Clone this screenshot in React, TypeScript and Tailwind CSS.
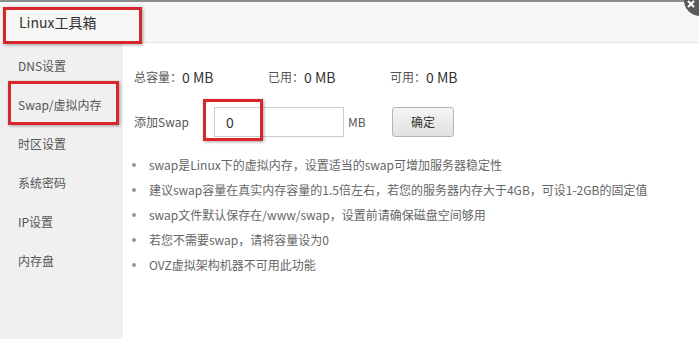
import React from "react";

const menu = ["DNS设置", "Swap/虚拟内存", "时区设置", "系统密码", "IP设置", "内存盘"];
const tips = [
  "swap是Linux下的虚拟内存，设置适当的swap可增加服务器稳定性",
  "建议swap容量在真实内存容量的1.5倍左右，若您的服务器内存大于4GB，可设1-2GB的固定值",
  "swap文件默认保存在/www/swap，设置前请确保磁盘空间够用",
  "若您不需要swap，请将容量设为0",
  "OVZ虚拟架构机器不可用此功能",
];

export default function App() {
  return (
    <div
      className="relative w-[699px] h-[339px] overflow-hidden bg-white text-[#333]"
      style={{ fontFamily: '"Noto Sans CJK SC", "Noto Sans", sans-serif' }}
    >
      <div className="h-[2px] w-[686px] bg-[#8c8c8c]" />
      <div className="h-[41px] bg-[#f6f6f6] border-b border-[#e6e6e6] flex items-center pl-[19px] text-[14px] text-[#333]">
        Linux工具箱
      </div>
      <div className="flex h-[296px]">
        <div className="w-[123px] bg-[#f0f0f0] pt-[3px]">
          {menu.map((m) => (
            <div key={m} className="h-[39px] flex items-center pl-[18px] text-[12px] text-[#555]">
              {m}
            </div>
          ))}
        </div>
        <div className="flex-1 pl-[11px] pt-[24px]">
          <div className="flex items-center h-[20px]">
            <div className="w-[134px] flex items-center">
              <span className="text-[12px] text-[#555]">总容量：</span>
              <span className="text-[14px] text-[#333]">0 MB</span>
            </div>
            <div className="w-[122px] flex items-center">
              <span className="text-[12px] text-[#555]">已用：</span>
              <span className="text-[14px] text-[#333]">0 MB</span>
            </div>
            <div className="flex items-center">
              <span className="text-[12px] text-[#555]">可用：</span>
              <span className="text-[14px] text-[#333]">0 MB</span>
            </div>
          </div>
          <div className="flex items-center mt-[20px] h-[30px]">
            <span className="w-[80px] text-[12px] text-[#555]">添加Swap</span>
            <div className="w-[130px] h-[30px] border border-[#cccccc] flex items-center pl-[11px] text-[14px] text-[#333] bg-white">
              0
            </div>
            <span className="ml-[4px] w-[44px] text-[12px] text-[#555]">MB</span>
            <button className="w-[62px] h-[30px] rounded-[3px] border border-[#b5b5b5] bg-gradient-to-b from-[#f5f5f5] to-[#e1e1e1] text-[12px] text-[#333]">
              确定
            </button>
          </div>
          <ul className="mt-[15px]">
            {tips.map((t) => (
              <li key={t} className="h-[25px] flex items-center text-[12px] text-[#666]">
                <span className="w-[4px] h-[4px] rounded-full bg-[#999] ml-[-2px] mr-[13px]" />
                {t}
              </li>
            ))}
          </ul>
        </div>
      </div>

      {/* close button */}
      <div className="absolute left-[684px] top-[-16px] w-[32px] h-[32px] rounded-full bg-[#5a5a5a] flex items-center justify-center">
        <svg width="32" height="32" viewBox="0 0 32 32" className="absolute left-0 top-0">
          <path d="M4 17 L10 23 M10 17 L4 23" stroke="#fff" strokeWidth="2" />
        </svg>
      </div>

      {/* red annotation boxes */}
      <div className="absolute left-[3px] top-[7px] w-[139px] h-[37px] border-[3px] border-[#d7262c] shadow-[1px_1px_3px_rgba(0,0,0,0.35)]" />
      <div className="absolute left-[8px] top-[81px] w-[111px] h-[44px] border-[3px] border-[#d7262c] shadow-[1px_1px_3px_rgba(0,0,0,0.35)]" />
      <div className="absolute left-[203px] top-[99px] w-[60px] h-[42px] border-[3px] border-[#d7262c] shadow-[1px_1px_3px_rgba(0,0,0,0.35)]" />
    </div>
  );
}
